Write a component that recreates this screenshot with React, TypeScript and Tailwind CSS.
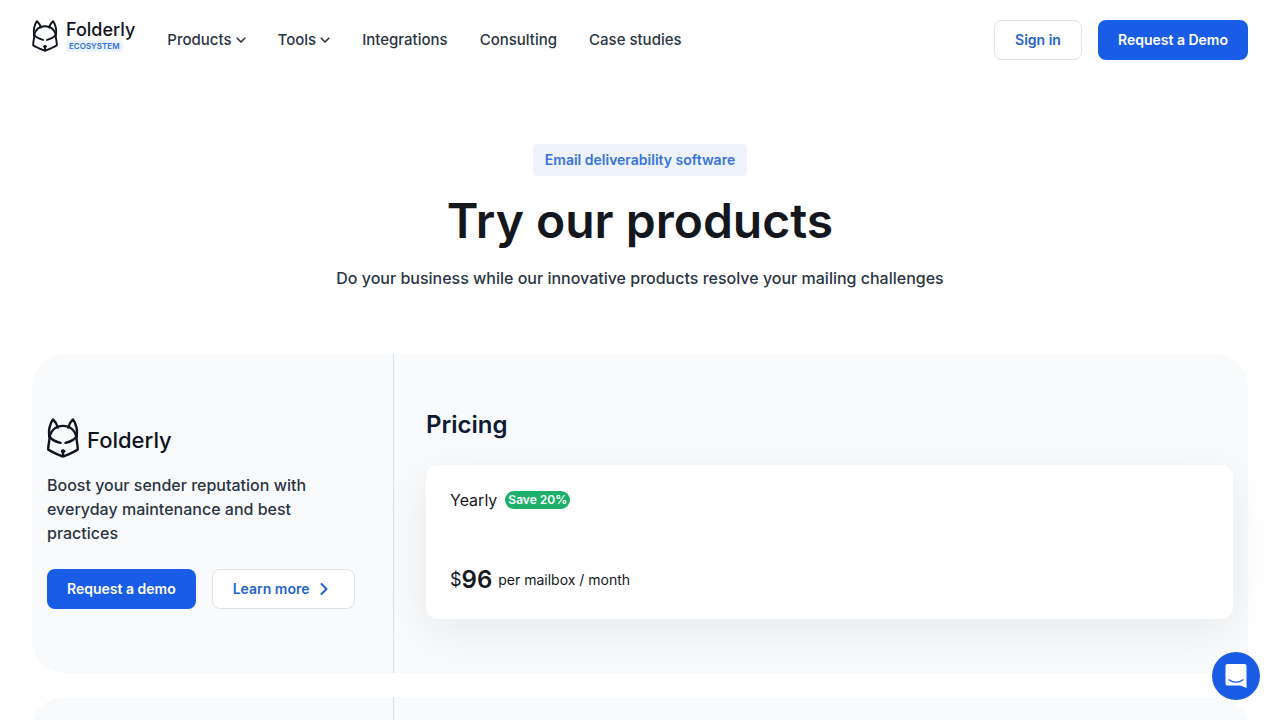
import type { ReactNode } from 'react';
import { ChevronRight } from 'lucide-react';

const navItems = [
  { label: 'Products', hasMenu: true },
  { label: 'Tools', hasMenu: true },
  { label: 'Integrations', hasMenu: false },
  { label: 'Consulting', hasMenu: false },
  { label: 'Case studies', hasMenu: false },
];

function FoxIcon({ className }: { className: string }) {
  return (
    <svg
      className={className}
      viewBox="0 0 32 40"
      fill="none"
      stroke="currentColor"
      strokeWidth="2.4"
      strokeLinecap="round"
      strokeLinejoin="round"
      aria-hidden="true"
    >
      <path d="M2.5 18.5C1.3 13 2.6 5.5 6 1.5C8.3 3.5 10 6.3 10.7 9.5" />
      <path d="M29.5 18.5C30.7 13 29.4 5.5 26 1.5C23.7 3.5 22 6.3 21.3 9.5" />
      <path d="M2.5 18.5C4.3 12 9.5 7.900 16 7.900S27.700 12 29.500 18.500" />
      <path d="M2.5 18.5C2.900 23 1.200 25 1.200 31.500C5.500 34.500 11 36.500 16 38.500C21 36.500 26.500 34.500 30.800 31.500C30.800 25 29.100 23 29.500 18.500" />
      <path d="M2.5 18.5C4.500 21.500 9 23.800 13.500 24.900" />
      <path d="M29.5 18.5C27.500 21.500 23 23.800 18.500 24.900" />
      <path d="M16 34V38" />
      <ellipse cx="16" cy="33.200" rx="1.900" ry="1.500" fill="currentColor" strokeWidth="1" />
    </svg>
  );
}

function MenuArrow() {
  return (
    <svg
      className="h-2 w-[10px]"
      viewBox="0 0 10 8"
      fill="none"
      stroke="currentColor"
      strokeWidth="1.6"
      strokeLinecap="round"
      strokeLinejoin="round"
      aria-hidden="true"
    >
      <path d="M1.200 2.200L5 6L8.800 2.200" />
    </svg>
  );
}

function Header() {
  return (
    <header className="flex h-20 items-center justify-between px-8">
      <div className="flex items-center gap-8">
        <a href="#" className="flex items-start gap-2 pb-2 text-[#10141f]">
          <FoxIcon className="h-8 w-[26px]" />
          <span className="flex flex-col items-start">
            <span className="text-lg leading-5 font-medium">Folderly</span>
            <span className="rounded-sm bg-[#edf3fe] px-[3px] text-[8px] leading-3 font-semibold text-[#2f6fe6]">
              ECOSYSTEM
            </span>
          </span>
        </a>
        <nav className="flex items-center gap-8 text-[15px] leading-6 font-medium text-[#2b3544]">
          {navItems.map(item => (
            <a key={item.label} href="#" className="flex items-center gap-1">
              {item.label}
              {item.hasMenu ? <MenuArrow /> : null}
            </a>
          ))}
        </nav>
      </div>
      <div className="flex gap-4 text-sm font-semibold">
        <button className="h-10 rounded-lg border border-[#e3e5e8] px-5 text-[#2563cf]">
          Sign in
        </button>
        <button className="h-10 rounded-lg bg-[#195de6] px-5 text-white">
          Request a Demo
        </button>
      </div>
    </header>
  );
}

function Hero() {
  return (
    <section className="flex flex-col items-center px-8 pt-16 text-center">
      <span className="rounded-sm bg-[#eef3fe] px-3 py-1.5 text-sm leading-5 font-semibold text-[#3874e3]">
        Email deliverability software
      </span>
      <h1 className="mt-4 text-5xl leading-[58px] font-semibold text-[#14171e]">
        Try our products
      </h1>
      <p className="mt-[14px] text-base leading-7 font-medium text-[#2b3544]">
        Do your business while our innovative products resolve your mailing challenges
      </p>
    </section>
  );
}

interface ProductCardProps {
  summary?: ReactNode;
  pricing?: ReactNode;
}

function ProductCard({ summary, pricing }: ProductCardProps) {
  return (
    <article className="flex min-h-[319px] rounded-4xl bg-[#f8fafc]">
      <div className="flex w-[362px] shrink-0 flex-col justify-center border-r border-[#dcdfe3] pr-8 pl-[15px]">
        {summary}
      </div>
      <div className="grow py-[54px] pr-[15px] pl-8">{pricing}</div>
    </article>
  );
}

function FolderlySummary() {
  return (
    <>
      <div className="flex items-end gap-2 text-[#10141f]">
        <FoxIcon className="h-10 w-8" />
        <span className="text-[22px] leading-9 font-medium">Folderly</span>
      </div>
      <p className="mt-[15px] text-base leading-6 font-medium text-[#2b3544]">
        Boost your sender reputation with everyday maintenance and best practices
      </p>
      <div className="mt-6 flex gap-4 text-sm font-semibold whitespace-nowrap">
        <button className="h-10 rounded-lg bg-[#195de6] px-5 text-white">
          Request a demo
        </button>
        <a
          href="#"
          className="flex h-10 items-center gap-1 rounded-lg border border-[#dfe2e6] bg-white px-5 text-[#2563cf]"
        >
          Learn more
          <ChevronRight className="size-5" strokeWidth={2.5} />
        </a>
      </div>
    </>
  );
}

function FolderlyPricing() {
  return (
    <>
      <h2 className="text-2xl leading-[33px] font-semibold text-[#0f1b33]">Pricing</h2>
      <div className="mt-6 rounded-xl bg-white px-6 py-[23px] shadow-[0_12px_48px_rgba(20,25,35,0.07)]">
        <div className="flex items-center gap-2 text-base leading-6 text-[#14171e]">
          Yearly
          <span className="rounded-full bg-[#1db06b] px-[3px] text-xs leading-[18px] font-semibold text-white">
            Save 20%
          </span>
        </div>
        <div className="mt-[52px] flex items-center gap-[6px] text-[#14171e]">
          <span className="flex items-center leading-8">
            <span className="text-lg">$</span>
            <span className="text-2xl font-semibold">96</span>
          </span>
          <span className="text-sm">per mailbox / month</span>
        </div>
      </div>
    </>
  );
}

function ChatButton() {
  return (
    <button
      aria-label="Open chat"
      className="fixed right-5 bottom-5 flex size-12 items-center justify-center rounded-full bg-[#195de6]"
    >
      <svg className="h-6 w-[22px]" viewBox="0 0 22 24" fill="none" aria-hidden="true">
        <path
          d="M2.500 0H19.500C20.700 0 21.500 .8 21.500 2V24L15.500 21.500H2.500C1.300 21.500 .5 20.700 .5 19.500V2C.5 .8 1.300 0 2.500 0Z"
          fill="#fff"
        />
        <path
          d="M4 15.800C8 19 14 19 18 15.800"
          stroke="#195de6"
          strokeWidth="1.300"
          strokeLinecap="round"
        />
      </svg>
    </button>
  );
}

function App() {
  return (
    <div className="h-screen overflow-y-auto bg-white font-['Inter',sans-serif]">
      <Header />
      <main>
        <Hero />
        <div className="mt-[62px] flex flex-col gap-6 px-8">
          <ProductCard summary={<FolderlySummary />} pricing={<FolderlyPricing />} />
          <ProductCard />
        </div>
      </main>
      <ChatButton />
    </div>
  );
}

export default App;
